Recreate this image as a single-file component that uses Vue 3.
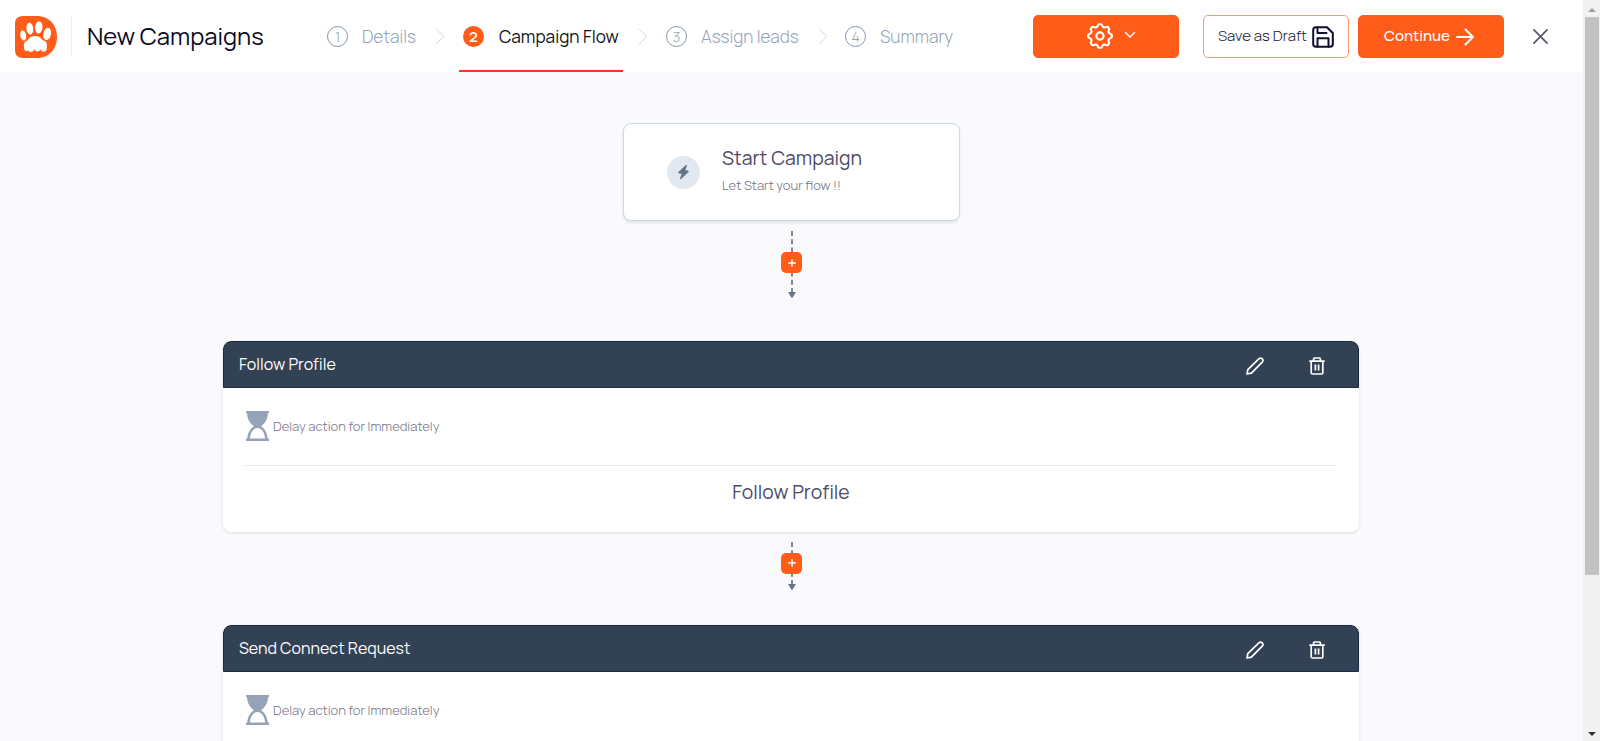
<template>
  <div class="page">
    <div class="main">
      <header class="topbar">
        <svg class="logo" viewBox="0 0 42 42">
          <path d="M8 0H22C34 0 42 9 42 21S34 42 22 42H8Q0 42 0 34V8Q0 0 8 0Z" fill="#ff5c1a" />
          <g fill="#fff">
            <ellipse cx="8.200" cy="19.5" rx="2.9" ry="5.1" transform="rotate(-10 8 19.5)" />
            <ellipse cx="14.800" cy="12.7" rx="3.4" ry="5.9" transform="rotate(-6 15 12.7)" />
            <ellipse cx="23.800" cy="11.4" rx="3.7" ry="6.1" transform="rotate(4 24.2 11.4)" />
            <ellipse cx="32.2" cy="18" rx="3.8" ry="6.2" transform="rotate(12 32.5 18)" />
            <path d="M14 22.500Q15.500 20 20 20Q25 20 26 22.500Q27.500 24.500 30 25Q32.300 26.500 31.800 30Q32.500 35.500 28.500 35.800Q25.800 35.800 25.300 33Q24.800 35.500 22.300 35.500Q19.800 35.500 19.300 33Q18.500 36 15.800 36Q13.800 36 13.300 34.500Q9 36.500 9 31Q8.300 27 10.800 25.300Q13 24.500 14 22.500Z" />
          </g>
        </svg>
        <div class="split"></div>
        <h1 class="page-title">New Campaigns</h1>

        <nav class="steps">
          <template v-for="(step, index) in steps" :key="step.label">
            <svg v-if="index > 0" class="chevron" viewBox="0 0 10 18">
              <path d="M.8 1 9 9 .8 17" />
            </svg>
            <div class="step" :class="[step.name, { active: index === current }]">
              <span class="num">{{ index + 1 }}</span>
              <span class="label">{{ step.label }}</span>
            </div>
          </template>
        </nav>

        <div class="buttons">
          <button class="btn btn-fill btn-settings">
            <svg class="gear" viewBox="0 0 24 24">
              <path d="M10.325 4.317c.426-1.756 2.924-1.756 3.350 0a1.724 1.724 0 0 0 2.573 1.066c1.543-.94 3.310.826 2.370 2.370a1.724 1.724 0 0 0 1.065 2.572c1.756.426 1.756 2.924 0 3.350a1.724 1.724 0 0 0-1.066 2.573c.94 1.543-.826 3.310-2.370 2.370a1.724 1.724 0 0 0-2.572 1.065c-.426 1.756-2.924 1.756-3.350 0a1.724 1.724 0 0 0-2.573-1.066c-1.543.94-3.310-.826-2.370-2.370a1.724 1.724 0 0 0-1.065-2.572c-1.756-.426-1.756-2.924 0-3.350a1.724 1.724 0 0 0 1.066-2.573c-.94-1.543.826-3.310 2.370-2.370 1 .608 2.296.07 2.572-1.065z" />
              <circle cx="12" cy="12" r="2.7" />
            </svg>
            <svg class="caret" viewBox="0 0 12 8">
              <path d="m1.500 1.500 4.500 4.500 4.500-4.500" />
            </svg>
          </button>
          <button class="btn btn-outline">
            <span>Save as Draft</span>
            <svg class="save" viewBox="0 0 22 22">
              <path d="M4 1.200H15L20.800 7V18Q20.800 20.800 18 20.800H4Q1.200 20.800 1.200 18V4Q1.200 1.200 4 1.200Z" />
              <path d="M5.500 1.500V7H14.500M5.500 20.500V12.200H16.500V20.500" />
            </svg>
          </button>
          <button class="btn btn-fill btn-continue">
            <span>Continue</span>
            <svg class="arrow" viewBox="0 0 18 18">
              <path d="M1 9H17M9.500 1.500 17 9 9.500 16.500" />
            </svg>
          </button>
          <svg class="close" viewBox="0 0 16 16">
            <path d="m1 1 14 14M15 1 1 15" />
          </svg>
        </div>
      </header>

      <div class="canvas">
        <div class="start-card">
          <div class="start-icon">
            <svg viewBox="0 0 12 15">
              <path d="M8.300 1 1.200 7.600Q.6 8.400 1.500 8.700L4.300 9.300 2.700 13.600Q2.800 14.500 3.700 14L10.700 7.600Q11.300 6.700 10.400 6.400L7.700 5.700 9.300 1.500Q9.300.5 8.300 1Z" />
            </svg>
          </div>
          <div>
            <div class="start-title">Start Campaign</div>
            <div class="start-sub">Let Start your flow !!</div>
          </div>
        </div>

        <template v-for="(action, index) in actions" :key="action.title">
          <div class="connector" :class="{ short: index > 0 }">
            <svg class="dash" viewBox="0 0 8 31" preserveAspectRatio="xMidYMin slice"><path d="M4 0V31" /></svg>
            <button class="add">
              <svg viewBox="0 0 8 8"><path d="M4 .2V7.800M.2 4H7.800" /></svg>
            </button>
            <!-- drawn upwards from the arrow head -->
            <svg class="tail" viewBox="0 0 8 26">
              <path class="tail-line" d="M4 21V0" />
              <path class="tail-head" d="M0 20H8L4.600 25.400Q4 26 3.400 25.400Z" />
            </svg>
          </div>
          <section class="action-card">
            <div class="action-head">
              <span class="action-name">{{ action.title }}</span>
              <svg class="edit" viewBox="0 0 18 18">
                <path d="M1 17 1.800 12.600 12.800 1.800Q14.500.4 16.300 1.800 17.700 3.600 16.200 5.200L5.400 16.100Z" />
              </svg>
              <svg class="trash" viewBox="0 0 16 18">
                <path d="M.3 4.200H15.700M4.600 4V2Q4.600 1 5.600 1H10.400Q11.400 1 11.400 2V4M2.200 4.500V15.700Q2.200 17 3.500 17H12.500Q13.800 17 13.800 15.700V4.500M6.400 7.500V13.500M9.600 7.500V13.500" />
              </svg>
            </div>
            <div class="action-body">
              <div class="delay">
                <svg class="hourglass" viewBox="0 0 23 30">
                  <path fill-rule="evenodd" d="M0 0H23V2H22C21.800 8.500 18.500 13 15 15.200C18.800 17.500 21.400 22 21.700 27.500H23V30H0V27.500H1.300C1.600 22 4.200 17.500 8 15.200C4.500 13 1.200 8.500 1 2H0ZM4 27.500H19C18.800 21.500 15.500 17 11.500 17S4.200 21.500 4 27.500Z" />
                </svg>
                <span>{{ action.delay }}</span>
              </div>
              <div v-if="action.summary" class="summary-line">{{ action.summary }}</div>
            </div>
          </section>
        </template>
      </div>
    </div>

    <div class="scrollbar">
      <svg class="sb-arrow" viewBox="0 0 8 4"><path d="M0 4 4 0 8 4Z" fill="#a0a0a0" /></svg>
      <div class="thumb"></div>
      <svg class="sb-arrow down" viewBox="0 0 8 4"><path d="M0 0 4 4 8 0Z" fill="#333" /></svg>
    </div>
  </div>
</template>

<script setup>
import { ref } from 'vue'

const current = ref(1)

const steps = [
  { name: 'details', label: 'Details' },
  { name: 'flow', label: 'Campaign Flow' },
  { name: 'leads', label: 'Assign leads' },
  { name: 'summary', label: 'Summary' }
]

const actions = [
  { title: 'Follow Profile', delay: 'Delay action for Immediately', summary: 'Follow Profile' },
  { title: 'Send Connect Request', delay: 'Delay action for Immediately' }
]
</script>

<style>
body {
  margin: 0;
  overflow: hidden;
}
</style>

<style scoped>
.page {
  display: flex;
  height: 100vh;
  overflow: hidden;
  font-family: Manrope, Inter, "Liberation Sans", sans-serif;
  background: #fafafc;
}

.page * {
  box-sizing: border-box;
}

svg {
  display: block;
  flex-shrink: 0;
  overflow: visible;
}

.main {
  flex: 1;
  min-width: 0;
}

.topbar {
  display: flex;
  align-items: center;
  height: 72px;
  padding: 0 34px 0 15px;
  background: #fff;
  white-space: nowrap;
}

.logo {
  width: 42px;
  height: 42px;
  margin-top: 1px;
}

.split {
  width: 1px;
  height: 41px;
  margin: 0 14px;
  background: #ececf0;
}

.page-title {
  width: 241px;
  margin: 0;
  padding-left: 1px;
  font-size: 23.800px;
  line-height: 32px;
  font-weight: 400;
  color: #0a0a23;
}

.steps {
  display: flex;
  align-items: center;
  align-self: stretch;
}

.step {
  display: flex;
  align-items: center;
  align-self: stretch;
  padding-top: 2px;
  border-bottom: 2px solid transparent;
  font-size: 17.200px;
  font-weight: 300;
  color: #94a3b8;
}

.step.details { width: 91px; }
.step.flow { width: 164px; padding-left: 4px; }
.step.leads { width: 137px; }
.step.summary { width: 110px; }

.num {
  display: flex;
  align-items: center;
  justify-content: center;
  width: 21px;
  height: 21px;
  margin-right: 14px;
  border: 1.500px solid #8093b0;
  border-radius: 50%;
  font-size: 14px;
}

.label {
  padding-top: 1px;
}

.active {
  border-bottom-color: #ff3a12;
  font-weight: 400;
  color: #111118;
}

.active .num {
  margin-right: 15px;
  border: 0;
  background: #ff5c1a;
  color: #fff;
  font-size: 15px;
  font-weight: 600;
}

.chevron {
  width: 10px;
  height: 17px;
  margin: 0 17px 0 15px;
  fill: none;
  stroke: #cbd5e1;
}

.flow + .chevron { margin-right: 18px; }
.details + .chevron { margin: 0 14px 0 17px; }

.buttons {
  display: flex;
  align-items: center;
  margin-left: auto;
}

.btn {
  display: flex;
  align-items: center;
  justify-content: center;
  width: 146px;
  height: 43px;
  padding: 0;
  border: 1px solid #ff5a1f;
  border-radius: 5px;
  font-family: inherit;
  font-size: 15px;
}

.btn span {
  margin-top: -2px;
}

.btn-fill {
  background: #ff5c1a;
  color: #fff;
}

.btn-settings {
  padding-left: 7px;
}

.btn-outline {
  margin: 0 9px 0 24px;
  border-color: #ff9477;
  background: #fff;
  color: #1a1a35;
  font-weight: 300;
}

.btn-continue {
  padding-right: 4px;
  font-weight: 500;
}

.btn svg,
.close {
  fill: none;
  stroke: currentColor;
  stroke-linecap: round;
  stroke-linejoin: round;
}

.btn .gear { width: 32px; height: 32px; stroke-width: 1.600; }
.btn .caret { width: 12px; height: 8px; margin: -3px 0 0 8px; stroke-width: 1.400; }
.btn .save { width: 22px; height: 22px; margin: 1px 0 0 5px; stroke: #0f0f2d; stroke-width: 2; }
.btn .arrow { width: 18px; height: 18px; margin: 1px 0 0 6px; stroke-width: 2; }

.close {
  width: 15px;
  height: 15px;
  margin: 1px 1px 0 29px;
  color: #55556b;
  stroke-width: 1.800;
}

.canvas {
  display: flex;
  flex-direction: column;
  align-items: center;
  padding-top: 51px;
}

.start-card {
  display: flex;
  align-items: center;
  width: 337px;
  height: 98px;
  padding-left: 43px;
  border: 1px solid #cbd8e8;
  border-radius: 8px;
  background: #fff;
  box-shadow: 0 2px 3px rgba(30, 41, 59, 0.1);
}

.start-icon {
  display: flex;
  align-items: center;
  justify-content: center;
  width: 33px;
  height: 33px;
  margin-right: 22px;
  border-radius: 50%;
  background: #e2e8f0;
}

.start-icon svg {
  width: 13px;
  height: 16px;
  fill: #64748b;
}

.start-title {
  margin-top: -1px;
  font-size: 19.400px;
  line-height: 28px;
  color: #4d4b68;
  font-weight: 400;
}

.start-sub {
  font-size: 13.100px;
  line-height: 27px;
  color: #71717f;
  font-weight: 300;
}

.connector {
  position: relative;
  display: flex;
  flex-direction: column;
  align-items: center;
  justify-content: space-between;
  height: 67px;
  margin: 10px 0 43px;
}

.connector.short {
  height: 48px;
  margin-bottom: 35px;
}

.dash,
.tail {
  width: 8px;
  fill: none;
  stroke: #475569;
  stroke-width: 1.400;
  stroke-dasharray: 5 3.300;
}

.dash { height: 31px; }
.short .dash { height: 20px; overflow: hidden; }
.tail { height: 26px; }

.tail-head {
  fill: #64748b;
  stroke: none;
}

/* sits over the dashed line */
.add {
  position: absolute;
  top: 21px;
  display: flex;
  align-items: center;
  justify-content: center;
  width: 21px;
  height: 21px;
  padding: 0;
  border: 0;
  border-radius: 5px;
  background: #ff5c1a;
  z-index: 1;
}

.short .add {
  top: 10.500px;
}

.add svg {
  width: 8px;
  height: 8px;
  stroke: #fff;
  stroke-width: 1.500;
}

.action-card {
  width: 1136px;
  height: 191px;
  margin-right: 1px;
  border-radius: 8px;
  background: #fff;
  box-shadow: 0 1px 3px rgba(30, 41, 59, 0.14);
  overflow: hidden;
}

.action-head {
  display: flex;
  align-items: center;
  height: 47px;
  padding: 0 33px 0 15px;
  border: 1px solid #172a47;
  border-radius: 8px 8px 0 0;
  background: #334155;
  color: #fff;
}

.action-name {
  margin: -1px auto 0 0;
  font-size: 16px;
}

.action-head svg {
  height: 18px;
  margin-top: 3px;
  fill: none;
  stroke: #fff;
  stroke-width: 1.700;
  stroke-linejoin: round;
}

.edit { width: 18px; }
.action-head .trash { width: 16px; margin-left: 45px; }

.action-body {
  padding: 0 22px;
}

.delay {
  display: flex;
  align-items: center;
  height: 78px;
  padding-bottom: 2px;
  border-bottom: 1px solid #e7e8ec;
  font-size: 13.100px;
  font-weight: 300;
  color: #74748a;
}

.hourglass {
  width: 23px;
  height: 30px;
  margin: 0 4px 0 1px;
  fill: #94a3b8;
}

.summary-line {
  padding-top: 12px;
  text-align: center;
  font-size: 19.400px;
  line-height: 28px;
  font-weight: 400;
  color: #4d4b68;
}

.scrollbar {
  display: flex;
  flex-direction: column;
  align-items: center;
  width: 17px;
  padding: 8px 0 5px;
  background: #f1f1f1;
}

.thumb {
  width: 14px;
  height: 558px;
  margin-top: 5px;
  background: #c1c1c1;
}

.sb-arrow {
  width: 8px;
  height: 4px;
}

.down {
  margin-top: auto;
}
</style>
